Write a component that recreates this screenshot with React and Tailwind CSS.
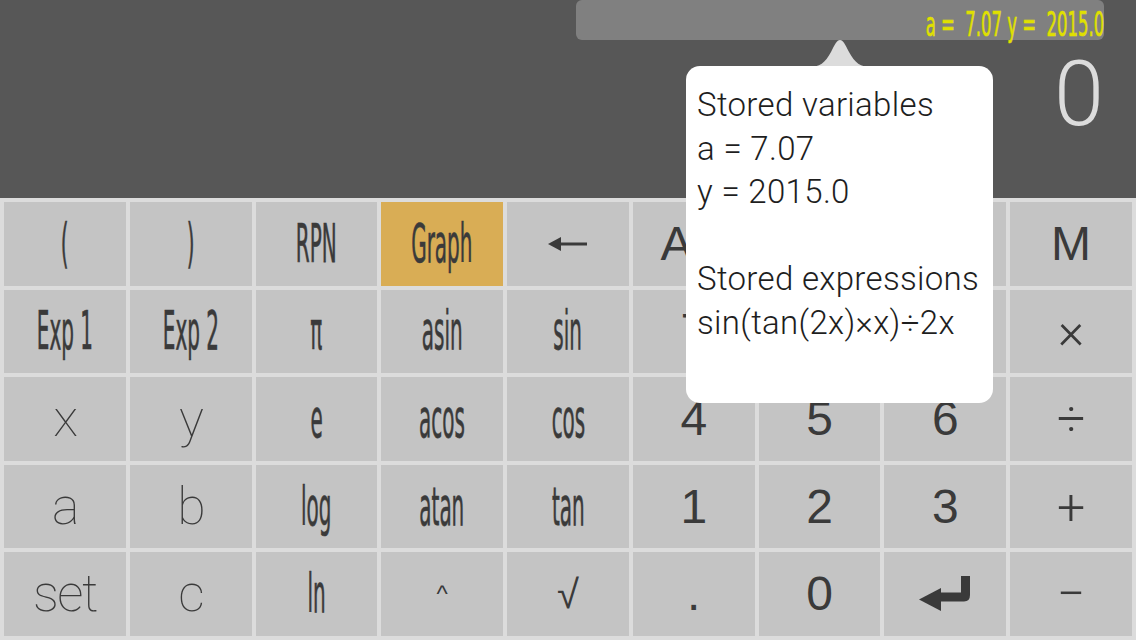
import React from 'react';

const COND = "font-['DejaVu_Sans',sans-serif] font-normal [-webkit-text-stroke:0.7px_currentColor]";
const NUM = "font-['Liberation_Sans',Arial,sans-serif]";
const LIGHT = "font-['Roboto','Liberation_Sans',sans-serif] font-light";
const THIN = "font-['Roboto','Liberation_Sans',sans-serif] font-thin";

const BackArrow = () => (
  <svg width="40" height="16" viewBox="0 0 40 16" className="text-[#3a3a3a]">
    <line x1="10" y1="8" x2="39" y2="8" stroke="currentColor" strokeWidth="3" />
    <polygon points="0,8 13,1 13,15" fill="currentColor" />
  </svg>
);

const EnterIcon = () => (
  <svg width="52" height="36" viewBox="0 0 52 36" className="text-[#3a3a3a]">
    <path d="M42 0 H51 V19 Q51 25.5 45 25.5 H20 V16.5 H42 Z" fill="currentColor" />
    <polygon points="0,23.5 22,12 22,35" fill="currentColor" />
  </svg>
);

// condensed label: normal glyphs squeezed sideways
const Cond = ({ children }) => (
  <span className={`inline-block whitespace-nowrap scale-x-[0.37] leading-none text-[54px] ${COND}`}>{children}</span>
);

const keys = [
  // row 1
  { t: '(', k: 'cond' }, { t: ')', k: 'cond' }, { t: 'RPN', k: 'cond' },
  { t: 'Graph', k: 'cond', hi: true }, { k: 'back' }, { t: 'AC', k: 'num' },
  { t: 'C', k: 'num' }, { t: 'M+', k: 'num' }, { t: 'M', k: 'num' },
  // row 2
  { t: 'Exp 1', k: 'cond' }, { t: 'Exp 2', k: 'cond' }, { t: 'π', k: 'cond' },
  { t: 'asin', k: 'cond' }, { t: 'sin', k: 'cond' }, { t: '7', k: 'num' },
  { t: '8', k: 'num' }, { t: '9', k: 'num' }, { t: '×', k: 'op' },
  // row 3
  { t: 'x', k: 'thin' }, { t: 'y', k: 'thin' }, { t: 'e', k: 'cond' },
  { t: 'acos', k: 'cond' }, { t: 'cos', k: 'cond' }, { t: '4', k: 'num' },
  { t: '5', k: 'num' }, { t: '6', k: 'num' }, { t: '÷', k: 'op' },
  // row 4
  { t: 'a', k: 'thin' }, { t: 'b', k: 'thin' }, { t: 'log', k: 'cond' },
  { t: 'atan', k: 'cond' }, { t: 'tan', k: 'cond' }, { t: '1', k: 'num' },
  { t: '2', k: 'num' }, { t: '3', k: 'num' }, { t: '+', k: 'op' },
  // row 5
  { t: 'set', k: 'thin' }, { t: 'c', k: 'thin' }, { t: 'ln', k: 'cond' },
  { t: '^', k: 'caret' }, { t: '√', k: 'root' }, { t: '.', k: 'num' },
  { t: '0', k: 'num' }, { k: 'enter' }, { t: '−', k: 'op' },
];

const KeyLabel = ({ item }) => {
  if (item.k === 'back') return <BackArrow />;
  if (item.k === 'enter') return <EnterIcon />;
  if (item.k === 'cond') return <Cond>{item.t}</Cond>;
  if (item.k === 'caret') return <span className={`${NUM} text-[24px] leading-none`}>{item.t}</span>;
  if (item.k === 'root') return <span className={`${NUM} text-[40px] leading-none`}>{item.t}</span>;
  if (item.k === 'op') return <span className={`${LIGHT} text-[50px] leading-none`}>{item.t}</span>;
  if (item.k === 'thin') return <span className={`${THIN} text-[52px] leading-none tracking-[-0.03em]`}>{item.t}</span>;
  return <span className={`${NUM} text-[48px] leading-none`}>{item.t}</span>;
};

export default function App() {
  return (
    <div className="w-[1136px] h-[640px] overflow-hidden relative bg-[#575757]">
      {/* display */}
      <div className="h-[198px] flex flex-col">
        <div className="flex justify-end pr-8">
          <div className="w-[528px] h-10 bg-[#808080] rounded-md flex justify-end">
            <span className={`inline-block origin-right scale-x-[0.485] whitespace-pre text-[34px] leading-none pt-[7px] text-[#e0e000] ${COND}`}>
              {'a =  7.07 y =  2015.0'}
            </span>
          </div>
        </div>
        <div className={`flex justify-end pr-[32px] mt-[10px] text-[90px] leading-none text-[#dcdcdc] ${LIGHT}`}>0</div>
      </div>

      {/* keypad */}
      <div className="h-[442px] bg-[#dcdcdc] p-1 grid grid-cols-9 grid-rows-5 gap-1">
        {keys.map((item, i) => (
          <div
            key={i}
            className={`flex items-center justify-center text-[#3a3a3a] ${item.hi ? 'bg-[#d9ad55]' : 'bg-[#c4c4c4]'}`}
          >
            <KeyLabel item={item} />
          </div>
        ))}
      </div>

      {/* popover */}
      <svg className="absolute left-[808px] top-[39px]" width="64" height="28" viewBox="0 0 64 28">
        <path d="M0 28 C12 28 17 24 23 13 C27 5 29 1 32 1 C35 1 37 5 41 13 C47 24 52 28 64 28 Z" fill="#dcdcdc" />
      </svg>
      <div className={`absolute left-[686px] top-[66px] w-[307px] h-[337px] bg-white rounded-[14px] pl-[11px] pt-[17px] text-[33px] leading-[43.5px] tracking-[0.01em] text-[#1e1e1e] whitespace-nowrap ${LIGHT}`}>
        <div>Stored variables</div>
        <div>a = 7.07</div>
        <div>y = 2015.0</div>
        <div>&nbsp;</div>
        <div>Stored expressions</div>
        <div>sin(tan(2x)×x)÷2x</div>
      </div>
    </div>
  );
}
